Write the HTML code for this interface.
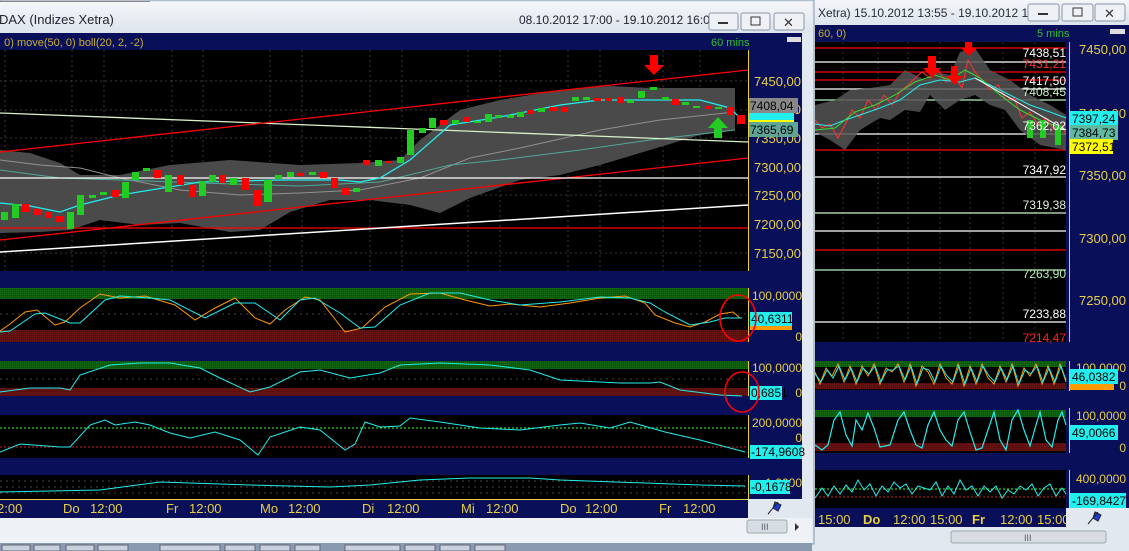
<!DOCTYPE html>
<html><head><meta charset="utf-8"><style>
html,body{margin:0;padding:0;width:1129px;height:551px;overflow:hidden;background:#dfe6ee;font-family:"Liberation Sans",sans-serif}
svg{display:block}
text{font-family:"Liberation Sans",sans-serif}
</style></head><body>
<svg width="1129" height="551" viewBox="0 0 1129 551" xmlns="http://www.w3.org/2000/svg">
<defs>
<linearGradient id="tb" x1="0" y1="0" x2="0" y2="1"><stop offset="0" stop-color="#f4f6f9"/><stop offset="1" stop-color="#dde4ec"/></linearGradient>
<pattern id="gp" width="2" height="2" patternUnits="userSpaceOnUse"><rect width="2" height="2" fill="#0b5a0b"/><rect width="1" height="1" fill="#1a6e1a"/></pattern>
<pattern id="rp" width="2" height="2" patternUnits="userSpaceOnUse"><rect width="2" height="2" fill="#5a0e0e"/><rect width="1" height="1" fill="#6e1a1a"/></pattern>
</defs>
<!-- ===== RIGHT WINDOW ===== -->
<rect x="812" y="0" width="317" height="551" fill="#e2e8ef"/>
<rect x="812" y="0" width="317" height="25" fill="url(#tb)"/>
<text x="818" y="17" font-size="12" fill="#1e2a3a">Xetra) 15.10.2012 13:55 - 19.10.2012 16...</text>
<g fill="#eef1f5" stroke="#8a97a8"><rect x="1028" y="4" width="31" height="17" rx="2"/><rect x="1062" y="4" width="31" height="17" rx="2"/><rect x="1095" y="4" width="30" height="17" rx="2"/></g>
<rect x="1038" y="13" width="10" height="2" fill="#333"/><rect x="1073" y="8" width="9" height="8" fill="none" stroke="#333"/><text x="1104" y="18" font-size="13" fill="#333">✕</text>
<rect x="815" y="25" width="314" height="502" fill="#0a0f5a"/>
<text x="818" y="37" font-size="11" fill="#c8b030">60, 0)</text>
<text x="1037" y="37" font-size="11" fill="#2cc02c">5 mins</text>
<rect x="1110" y="29" width="15" height="5" fill="#ddd"/>
<rect x="815" y="42" width="251" height="300" fill="#000"/>
<g stroke="#333" stroke-dasharray="2,3"><line x1="843" y1="42" x2="843" y2="342"/><line x1="878" y1="42" x2="878" y2="342"/><line x1="908" y1="42" x2="908" y2="342"/><line x1="940" y1="42" x2="940" y2="342"/><line x1="970" y1="42" x2="970" y2="342"/><line x1="1003" y1="42" x2="1003" y2="342"/><line x1="1035" y1="42" x2="1035" y2="342"/></g>
<g stroke-width="1.3">
<line x1="815" y1="48" x2="1066" y2="48" stroke="#f00"/><line x1="815" y1="62" x2="1066" y2="62" stroke="#fff"/>
<line x1="815" y1="72" x2="1066" y2="72" stroke="#f00"/><line x1="815" y1="80" x2="1066" y2="80" stroke="#f00"/>
<line x1="815" y1="89" x2="1066" y2="89" stroke="#fff"/><line x1="815" y1="100" x2="1066" y2="100" stroke="#b8f0b8"/>
<line x1="815" y1="134" x2="1066" y2="134" stroke="#fff"/><line x1="815" y1="150" x2="1066" y2="150" stroke="#f00"/>
<line x1="815" y1="177" x2="1066" y2="177" stroke="#fff"/><line x1="815" y1="213" x2="1066" y2="213" stroke="#d0f0d0"/>
<line x1="815" y1="231" x2="1066" y2="231" stroke="#fff"/><line x1="815" y1="250" x2="1066" y2="250" stroke="#f00"/>
<line x1="815" y1="270" x2="1066" y2="270" stroke="#b8f0b8"/><line x1="815" y1="322" x2="1066" y2="322" stroke="#fff"/>
</g>
<path d="M815,105 L835,100 850,90 870,88 890,85 905,70 925,80 935,72 950,75 960,52 975,48 990,70 1010,80 1030,95 1050,105 1066,115 L1066,150 1040,145 1020,130 1005,110 990,105 975,95 960,100 945,110 930,95 920,112 905,110 890,120 880,118 860,130 845,150 830,140 815,132Z" fill="#555" opacity="0.85"/>
<polyline points="815,120 822,128 830,124 838,138 845,125 852,110 860,118 868,100 876,110 884,95 892,105 900,92 908,85 915,78 922,72 930,78 938,70 946,82 954,75 962,88 968,60 975,72 982,80 990,90 998,85 1006,100 1014,98 1022,118 1030,112 1038,125 1046,118 1054,130 1062,125 1066,135" fill="none" stroke="#f33" stroke-width="1"/>
<polyline points="815,124 830,126 845,120 860,115 880,108 900,100 920,85 940,80 960,82 975,78 990,85 1010,95 1030,105 1050,112 1066,118" fill="none" stroke="#2ee" stroke-width="1"/>
<polyline points="815,130 835,128 855,112 875,105 895,95 915,82 935,75 950,80 965,70 980,78 1000,95 1020,110 1040,120 1066,130" fill="none" stroke="#3d3" stroke-width="1"/>
<line x1="975" y1="78" x2="1066" y2="130" stroke="#fff"/>
<g fill="#f00"><path d="M928,56h8v12h5l-9,10-9-10h5z"/><path d="M951,66h7v10h5l-8,9-9-9h5z"/><path d="M965,42h7v6h5l-8,8-8-8h4z"/></g>
<g fill="#2c2"><rect x="1027" y="120" width="6" height="18"/><rect x="1040" y="120" width="6" height="18"/><rect x="1055" y="125" width="6" height="20"/></g>
<g font-size="12" text-anchor="end">
<text x="1066" y="57" fill="#fff">7438,51</text><text x="1066" y="68" fill="#f33">7431,21</text>
<text x="1066" y="85" fill="#fff">7417,50</text><text x="1066" y="96" fill="#c8f0c8">7408,45</text>
<text x="1066" y="130" fill="#fff">7362,02</text><text x="1066" y="174" fill="#fff">7347,92</text>
<text x="1066" y="209" fill="#e0f0e0">7319,38</text><text x="1066" y="278" fill="#b8f0b8">7263,90</text>
<text x="1066" y="318" fill="#fff">7233,88</text><text x="1066" y="342" fill="#f22">7214,47</text>
</g>
<rect x="1069" y="42" width="58" height="300" fill="#0a0f5a"/><line x1="1069.5" y1="42" x2="1069.5" y2="342" stroke="#e8d040"/>
<g font-size="13" fill="#e8d040" text-anchor="end"><text x="1126" y="54">7450,00</text><text x="1126" y="118">7400,00</text><text x="1126" y="180">7350,00</text><text x="1126" y="243">7300,00</text><text x="1126" y="305">7250,00</text></g>
<rect x="1070" y="111" width="48" height="15" fill="#2ee"/><text x="1072" y="123" font-size="12">7397,24</text>
<rect x="1070" y="125" width="48" height="15" fill="#5fb8a0"/><text x="1072" y="137" font-size="12">7384,73</text>
<rect x="1070" y="139" width="43" height="15" fill="#ff0"/><text x="1072" y="151" font-size="12">7372,51</text>
<!-- right osc1 -->
<rect x="815" y="361" width="251" height="29" fill="#000"/><rect x="815" y="361" width="251" height="6" fill="url(#gp)"/><rect x="815" y="383" width="251" height="6" fill="url(#rp)"/>
<polyline points="815,372 820,384 826,368 832,376 838,364 844,382 850,366 856,384 862,366 868,376 874,364 880,384 886,368 892,372 898,364 904,382 910,364 916,386 922,366 928,372 934,384 940,364 946,378 952,384 958,364 964,386 970,366 976,384 982,364 988,378 994,384 1000,366 1006,382 1012,364 1018,386 1024,368 1030,376 1036,364 1042,384 1048,366 1054,384 1060,364 1066,382" fill="none" stroke="#f90"/>
<polyline points="815,374 821,382 827,370 833,378 839,366 845,380 851,368 857,382 863,368 869,374 875,366 881,382 887,370 893,370 899,366 905,380 911,366 917,384 923,368 929,370 935,382 941,366 947,376 953,382 959,366 965,384 971,368 977,382 983,366 989,376 995,382 1001,368 1007,380 1013,366 1019,384 1025,370 1031,374 1037,366 1043,382 1049,368 1055,382 1061,366 1066,380" fill="none" stroke="#2ee"/>
<rect x="1069" y="361" width="58" height="30" fill="#0a0f5a"/><line x1="1069.5" y1="361" x2="1069.5" y2="391" stroke="#e8d040"/>
<text x="1126" y="372" font-size="12" fill="#e8d040" text-anchor="end">100,0000</text><text x="1126" y="390" font-size="12" fill="#e8d040" text-anchor="end">0</text>
<rect x="1070" y="384" width="44" height="6" fill="#f90"/>
<rect x="1070" y="369" width="48" height="15" fill="#2ee"/><text x="1072" y="381" font-size="12">46,0382</text>
<!-- right osc2 -->
<rect x="815" y="410" width="251" height="43" fill="#000"/><rect x="815" y="410" width="251" height="7" fill="url(#gp)"/><rect x="815" y="443" width="251" height="8" fill="url(#rp)"/>
<polyline points="815,445 822,450 828,445 834,420 840,412 846,435 852,446 856,420 862,430 868,413 874,428 880,447 890,445 898,420 904,412 910,430 916,445 922,448 928,425 934,412 940,430 946,440 952,446 958,420 964,412 970,432 976,450 982,448 988,430 994,412 1000,440 1006,450 1012,420 1018,410 1024,430 1030,446 1036,425 1040,412 1046,440 1052,447 1058,420 1062,412 1066,425" fill="none" stroke="#2ee" stroke-width="1.2"/>
<rect x="1069" y="408" width="58" height="45" fill="#0a0f5a"/><line x1="1069.5" y1="408" x2="1069.5" y2="453" stroke="#e8d040"/>
<text x="1126" y="420" font-size="12" fill="#e8d040" text-anchor="end">100,0000</text><text x="1126" y="452" font-size="12" fill="#e8d040" text-anchor="end">0</text>
<rect x="1070" y="425" width="48" height="15" fill="#2ee"/><text x="1072" y="437" font-size="12">49,0066</text>
<!-- right osc3 -->
<rect x="815" y="470" width="251" height="38" fill="#000"/>
<line x1="815" y1="489" x2="1066" y2="489" stroke="#3f3" stroke-dasharray="2,2"/><line x1="815" y1="497" x2="1066" y2="497" stroke="#c22" stroke-dasharray="2,2"/>
<polyline points="815,498 822,488 828,496 834,486 840,494 846,485 852,492 858,480 864,490 870,484 876,496 882,486 888,492 894,482 900,488 906,484 912,494 918,486 924,488 930,490 936,482 942,496 948,486 954,494 960,480 966,490 972,486 978,496 984,486 990,492 996,486 1002,498 1008,490 1014,494 1020,486 1026,490 1032,484 1038,496 1044,488 1050,484 1056,496 1062,488 1066,494" fill="none" stroke="#2ee"/>
<rect x="1069" y="470" width="58" height="38" fill="#0a0f5a"/><line x1="1069.5" y1="470" x2="1069.5" y2="508" stroke="#e8d040"/>
<text x="1126" y="483" font-size="12" fill="#e8d040" text-anchor="end">400,0000</text>
<rect x="1070" y="493" width="56" height="15" fill="#2ee"/><text x="1072" y="505" font-size="12">-169,8427</text>
<g font-size="13" fill="#e8d040"><text x="818" y="524">15:00</text><text x="863" y="524" font-weight="bold">Do</text><text x="893" y="524">12:00</text><text x="930" y="524">15:00</text><text x="972" y="524" font-weight="bold">Fr</text><text x="1000" y="524">12:00</text><text x="1037" y="524">15:00</text></g>
<rect x="1066" y="508" width="63" height="19" fill="#e2e8ef"/>
<path d="M1088,524 L1098,512 M1095,512 l6,3 -3,6 -5,-3z" stroke="#223" fill="#1a3ad8"/>
<rect x="951" y="531" width="155" height="12" rx="2" fill="#d8dde4" stroke="#9aa"/><text x="1024" y="541" font-size="9" fill="#556">III</text>
<!-- ===== LEFT WINDOW ===== -->
<rect x="0" y="0" width="814" height="544" fill="#e2e8ef" stroke="#8b99aa"/>
<rect x="0" y="2" width="812" height="31" fill="url(#tb)"/>
<line x1="0" y1="1.5" x2="150" y2="1.5" stroke="#888"/>
<text x="-1" y="24" font-size="13" fill="#223">DAX (Indizes Xetra)</text>
<text x="519" y="24" font-size="12" fill="#223">08.10.2012 17:00 - 19.10.2012 16:00</text>
<g fill="#eef1f5" stroke="#8a97a8"><rect x="709" y="13" width="29" height="17" rx="2"/><rect x="741" y="13" width="29" height="17" rx="2"/><rect x="774" y="13" width="30" height="17" rx="2"/></g>
<rect x="718" y="22" width="10" height="2" fill="#333"/><rect x="751" y="17" width="9" height="8" fill="none" stroke="#333"/><text x="783" y="27" font-size="13" fill="#333">✕</text>
<rect x="0" y="33" width="802" height="485" fill="#0a0f5a"/>
<text x="-2" y="46" font-size="11" fill="#c8b030">, 0) move(50, 0) boll(20, 2, -2)</text>
<text x="711" y="46" font-size="11" fill="#2cc02c">60 mins</text>
<rect x="787" y="37" width="14" height="5" fill="#ddd"/>
<!-- main chart -->
<rect x="0" y="50" width="748" height="221" fill="#000"/>
<g stroke="#3a3a3a" stroke-dasharray="2,3"><line x1="5" y1="50" x2="5" y2="271"/><line x1="72" y1="50" x2="72" y2="271"/><line x1="104" y1="50" x2="104" y2="271"/><line x1="172" y1="50" x2="172" y2="271"/><line x1="203" y1="50" x2="203" y2="271"/><line x1="270" y1="50" x2="270" y2="271"/><line x1="302" y1="50" x2="302" y2="271"/><line x1="370" y1="50" x2="370" y2="271"/><line x1="402" y1="50" x2="402" y2="271"/><line x1="468" y1="50" x2="468" y2="271"/><line x1="500" y1="50" x2="500" y2="271"/><line x1="568" y1="50" x2="568" y2="271"/><line x1="600" y1="50" x2="600" y2="271"/><line x1="663" y1="50" x2="663" y2="271"/><line x1="700" y1="50" x2="700" y2="271"/>
<line x1="0" y1="81" x2="748" y2="81"/><line x1="0" y1="110" x2="748" y2="110"/><line x1="0" y1="138" x2="748" y2="138"/><line x1="0" y1="195" x2="748" y2="195"/><line x1="0" y1="253" x2="748" y2="253"/></g>
<path d="M0,150 L30,153 60,163 80,175 120,175 170,165 230,160 300,165 360,163 400,160 420,140 460,110 500,100 560,90 610,86 650,88 700,88 735,88 L735,130 700,135 650,150 600,165 560,175 520,180 470,198 440,213 410,205 370,200 330,200 290,212 260,230 230,232 180,223 140,225 100,220 70,230 40,232 0,233Z" fill="#4a4a4a"/>
<polyline points="0,160 40,165 80,168 120,178 180,190 240,195 300,193 360,190 420,178 470,158 520,148 600,130 660,120 735,112" fill="none" stroke="#909090"/>
<polyline points="0,170 60,178 120,180 200,183 300,186 380,182 450,165 500,160 580,150 650,140 735,130" fill="none" stroke="#50a898"/>
<line x1="0" y1="113" x2="748" y2="142" stroke="#d8f0c8" stroke-width="1.3"/>
<line x1="0" y1="152" x2="748" y2="70" stroke="#f00" stroke-width="1.3"/>
<line x1="0" y1="240" x2="748" y2="158" stroke="#f00" stroke-width="1.3"/>
<line x1="0" y1="178" x2="748" y2="178" stroke="#fff" stroke-width="1.3"/>
<line x1="0" y1="228" x2="748" y2="228" stroke="#f00" stroke-width="1.3"/>
<line x1="0" y1="252" x2="748" y2="205" stroke="#fff" stroke-width="1.5"/>
<polyline points="0,203 30,206 60,212 80,205 120,195 200,182 280,180 340,180 360,182 380,178 410,160 450,125 500,117 560,105 600,100 650,100 700,100 730,108 740,118" fill="none" stroke="#2ee" stroke-width="1.3"/>
<g>
<rect x="1" y="212" width="7" height="8" fill="#2c2"/><rect x="12" y="204" width="7" height="14" fill="#2c2"/><rect x="22" y="204" width="7" height="8" fill="#f00"/><rect x="34" y="209" width="7" height="6" fill="#f00"/><rect x="45" y="212" width="7" height="6" fill="#f00"/><rect x="55" y="216" width="8" height="6" fill="#f00"/>
<rect x="67" y="212" width="7" height="17" fill="#2c2"/><rect x="77" y="195" width="7" height="20" fill="#2c2"/><rect x="89" y="195" width="7" height="3" fill="#2c2"/><rect x="100" y="192" width="7" height="3" fill="#2c2"/><rect x="112" y="190" width="7" height="7" fill="#f00"/><rect x="122" y="182" width="7" height="16" fill="#2c2"/><rect x="132" y="172" width="7" height="8" fill="#2c2"/><rect x="143" y="168" width="7" height="3" fill="#2c2"/><rect x="154" y="170" width="7" height="8" fill="#f00"/><rect x="165" y="175" width="7" height="17" fill="#2c2"/><rect x="177" y="175" width="7" height="10" fill="#f00"/><rect x="189" y="185" width="7" height="12" fill="#f00"/><rect x="199" y="181" width="7" height="15" fill="#2c2"/><rect x="209" y="175" width="7" height="7" fill="#2c2"/><rect x="219" y="175" width="7" height="8" fill="#f00"/><rect x="230" y="178" width="7" height="7" fill="#2c2"/><rect x="242" y="178" width="7" height="12" fill="#f00"/><rect x="253" y="190" width="8" height="16" fill="#f00"/><rect x="264" y="180" width="8" height="22" fill="#2c2"/><rect x="275" y="175" width="7" height="4" fill="#2c2"/><rect x="287" y="172" width="7" height="5" fill="#2c2"/><rect x="297" y="173" width="7" height="3" fill="#f00"/><rect x="309" y="172" width="7" height="3" fill="#2c2"/><rect x="320" y="172" width="7" height="6" fill="#f00"/><rect x="331" y="178" width="7" height="10" fill="#f00"/><rect x="342" y="188" width="7" height="7" fill="#f00"/><rect x="353" y="188" width="7" height="4" fill="#2c2"/>
<rect x="363" y="160" width="7" height="5" fill="#f00"/><rect x="375" y="160" width="7" height="6" fill="#2c2"/><rect x="385" y="161" width="7" height="2" fill="#f00"/><rect x="397" y="157" width="7" height="6" fill="#2c2"/><rect x="407" y="130" width="7" height="25" fill="#2c2"/><rect x="419" y="128" width="7" height="5" fill="#2c2"/><rect x="429" y="118" width="7" height="10" fill="#2c2"/><rect x="440" y="120" width="7" height="5" fill="#f00"/><rect x="452" y="120" width="7" height="4" fill="#2c2"/><rect x="463" y="117" width="7" height="5" fill="#f00"/><rect x="474" y="121" width="7" height="2" fill="#2c2"/><rect x="485" y="114" width="7" height="8" fill="#2c2"/><rect x="495" y="115" width="7" height="3" fill="#2c2"/><rect x="507" y="115" width="7" height="3" fill="#2c2"/><rect x="517" y="112" width="7" height="5" fill="#2c2"/><rect x="527" y="110" width="7" height="4" fill="#f00"/><rect x="538" y="108" width="7" height="4" fill="#2c2"/><rect x="550" y="107" width="7" height="4" fill="#f00"/><rect x="561" y="107" width="7" height="5" fill="#f00"/><rect x="572" y="97" width="7" height="4" fill="#2c2"/><rect x="583" y="97" width="7" height="3" fill="#2c2"/><rect x="594" y="98" width="7" height="3" fill="#f00"/><rect x="605" y="98" width="7" height="3" fill="#f00"/><rect x="617" y="97" width="7" height="6" fill="#f00"/><rect x="627" y="100" width="7" height="3" fill="#2c2"/><rect x="638" y="91" width="7" height="7" fill="#2c2"/><rect x="650" y="87" width="7" height="3" fill="#2c2"/><rect x="662" y="97" width="7" height="3" fill="#2c2"/><rect x="672" y="99" width="7" height="6" fill="#f00"/><rect x="682" y="102" width="7" height="3" fill="#2c2"/><rect x="693" y="106" width="7" height="2" fill="#2c2"/><rect x="705" y="106" width="7" height="3" fill="#f00"/><rect x="715" y="107" width="7" height="2" fill="#2c2"/><rect x="727" y="107" width="7" height="8" fill="#f00"/><rect x="737" y="115" width="8" height="9" fill="#f00"/>
</g>
<path d="M650,55h8v10h6l-10,10-10-10h6z" fill="#f00"/>
<path d="M714,138h8v-10h6l-10,-11-10,11h6z" fill="#2c2"/>
<rect x="748" y="50" width="54" height="221" fill="#0a0f5a"/><line x1="748.5" y1="50" x2="748.5" y2="271" stroke="#e8d040"/>
<g font-size="13" fill="#e8d040" text-anchor="end"><text x="801" y="86">7450,00</text><text x="801" y="114">7400,00</text><text x="801" y="143">7350,00</text><text x="801" y="172">7300,00</text><text x="801" y="200">7250,00</text><text x="801" y="229">7200,00</text><text x="801" y="258">7150,00</text></g>
<rect x="749" y="98" width="49" height="15" fill="#888"/><text x="750" y="110" font-size="12">7408,04</text>
<rect x="749" y="113" width="45" height="7" fill="#2ee"/><rect x="749" y="120" width="45" height="4" fill="#ff0"/>
<rect x="749" y="122" width="49" height="15" fill="#5fa596"/><text x="750" y="134" font-size="12">7365,69</text>
<!-- osc1 -->
<rect x="0" y="288" width="748" height="54" fill="#000"/><rect x="0" y="288" width="748" height="11" fill="url(#gp)"/><rect x="0" y="330" width="748" height="12" fill="url(#rp)"/>
<line x1="0" y1="314" x2="748" y2="314" stroke="#444" stroke-dasharray="2,4"/>
<polyline points="0,331 10,324 25,312 37,310 55,325 65,322 80,308 100,294 120,298 145,296 175,305 195,320 215,308 235,298 255,318 270,324 285,310 305,297 320,300 345,332 362,328 385,307 410,294 440,293 465,300 490,306 510,304 540,307 570,303 600,298 625,296 645,303 655,315 675,323 690,327 705,322 720,314 733,312 740,318" fill="none" stroke="#f90"/>
<polyline points="0,332 10,331 35,314 45,313 70,323 80,323 105,300 120,296 150,298 170,300 205,318 235,303 255,303 280,320 300,300 315,298 340,313 360,328 375,327 400,305 430,293 460,293 490,300 520,305 560,302 600,297 630,298 650,303 665,312 690,325 710,322 725,318 742,318" fill="none" stroke="#2ee"/>
<rect x="748" y="288" width="54" height="54" fill="#0a0f5a"/><line x1="748.5" y1="288" x2="748.5" y2="342" stroke="#e8d040"/>
<text x="802" y="300" font-size="12" fill="#e8d040" text-anchor="end">100,0000</text><text x="802" y="341" font-size="12" fill="#e8d040" text-anchor="end">0</text>
<rect x="750" y="322" width="42" height="8" fill="#f90"/>
<rect x="750" y="312" width="42" height="14" fill="#2ee"/><text x="751" y="323" font-size="12">40,6311</text>
<ellipse cx="738" cy="318" rx="18" ry="23" fill="none" stroke="#f00" stroke-width="1.6"/>
<!-- osc2 -->
<rect x="0" y="361" width="748" height="35" fill="#000"/><rect x="0" y="361" width="748" height="8" fill="url(#gp)"/><rect x="0" y="388" width="748" height="8" fill="url(#rp)"/>
<line x1="0" y1="379" x2="748" y2="379" stroke="#444" stroke-dasharray="2,4"/>
<polyline points="0,392 30,388 60,388 70,390 80,375 110,365 140,363 170,363 200,368 220,378 250,392 270,387 300,372 320,370 350,378 380,373 400,365 440,363 490,365 530,370 560,380 620,383 650,383 660,382 680,390 720,395 742,396" fill="none" stroke="#2ee"/>
<rect x="748" y="361" width="54" height="35" fill="#0a0f5a"/><line x1="748.5" y1="361" x2="748.5" y2="396" stroke="#e8d040"/>
<text x="802" y="372" font-size="12" fill="#e8d040" text-anchor="end">100,0000</text><text x="802" y="397" font-size="12" fill="#e8d040" text-anchor="end">0</text>
<rect x="750" y="386" width="32" height="14" fill="#2ee"/><text x="751" y="397" font-size="12">0,6851</text>
<ellipse cx="742" cy="392" rx="17" ry="20" fill="none" stroke="#f00" stroke-width="1.6"/>
<!-- osc3 -->
<rect x="0" y="415" width="748" height="43" fill="#000"/>
<line x1="0" y1="428" x2="748" y2="428" stroke="#3f3" stroke-dasharray="2,2"/><line x1="0" y1="447" x2="748" y2="447" stroke="#c22" stroke-dasharray="2,2"/>
<polyline points="0,452 20,444 60,447 70,447 90,425 105,420 115,425 135,422 150,425 170,433 190,438 215,432 240,440 258,455 270,437 300,427 320,430 345,450 355,444 365,422 380,427 400,426 410,418 440,422 480,428 520,430 560,425 580,423 610,428 630,422 665,432 700,440 745,452" fill="none" stroke="#2ee"/>
<rect x="748" y="415" width="54" height="43" fill="#0a0f5a"/><line x1="748.5" y1="415" x2="748.5" y2="458" stroke="#e8d040"/>
<text x="802" y="427" font-size="12" fill="#e8d040" text-anchor="end">200,0000</text><text x="802" y="442" font-size="12" fill="#e8d040" text-anchor="end">0</text>
<rect x="750" y="445" width="52" height="14" fill="#2ee"/><text x="751" y="456" font-size="12">-174,9608</text>
<!-- osc4 -->
<rect x="0" y="475" width="748" height="24" fill="#000"/>
<g stroke="#444" stroke-dasharray="2,4"><line x1="0" y1="481" x2="748" y2="481"/><line x1="0" y1="487" x2="748" y2="487"/><line x1="0" y1="493" x2="748" y2="493"/></g>
<polyline points="0,492 100,490 160,482 250,485 330,487 370,485 420,480 470,478 530,478 560,480 700,485 745,486" fill="none" stroke="#2ee"/>
<rect x="748" y="475" width="54" height="24" fill="#0a0f5a"/><line x1="748.5" y1="475" x2="748.5" y2="499" stroke="#e8d040"/>
<text x="802" y="487" font-size="12" fill="#e8d040" text-anchor="end">1,0000</text>
<rect x="750" y="480" width="40" height="14" fill="#2ee"/><text x="751" y="491" font-size="12">-0,1678</text>
<line x1="0" y1="499.5" x2="748" y2="499.5" stroke="#e8d040"/>
<g font-size="13" fill="#e8d040"><text x="-3" y="513">2:00</text><text x="63" y="513">Do</text><text x="90" y="513">12:00</text><text x="166" y="513">Fr</text><text x="189" y="513">12:00</text><text x="260" y="513">Mo</text><text x="288" y="513">12:00</text><text x="362" y="513">Di</text><text x="387" y="513">12:00</text><text x="461" y="513">Mi</text><text x="486" y="513">12:00</text><text x="560" y="513">Do</text><text x="585" y="513">12:00</text><text x="659" y="513">Fr</text><text x="683" y="513">12:00</text></g>
<rect x="748" y="499" width="54" height="19" fill="#e2e8ef"/>
<path d="M768,514 L778,502 M775,502 l6,3 -3,6 -5,-3z" stroke="#223" fill="#1a3ad8"/>
<rect x="0" y="518" width="812" height="25" fill="#eef1f5"/>
<rect x="747" y="520" width="40" height="13" rx="2" fill="#d8dde4" stroke="#9aa"/><text x="761" y="530" font-size="9" fill="#556">III</text>
<path d="M795,523 l4,4 -4,4z" fill="#333"/>
<!-- taskbar -->
<rect x="0" y="543" width="812" height="8" fill="#8a9ab0"/>
<g fill="#c8d2de" stroke="#667"><rect x="2" y="545" width="28" height="6"/><rect x="34" y="545" width="26" height="6"/><rect x="66" y="545" width="28" height="6"/><rect x="98" y="545" width="30" height="6"/><rect x="160" y="545" width="60" height="6"/><rect x="225" y="545" width="30" height="6"/><rect x="260" y="545" width="30" height="6"/><rect x="295" y="545" width="25" height="6"/><rect x="345" y="545" width="55" height="6"/><rect x="405" y="545" width="30" height="6"/><rect x="440" y="545" width="30" height="6"/><rect x="475" y="545" width="30" height="6"/></g>
</svg>
</body></html>
